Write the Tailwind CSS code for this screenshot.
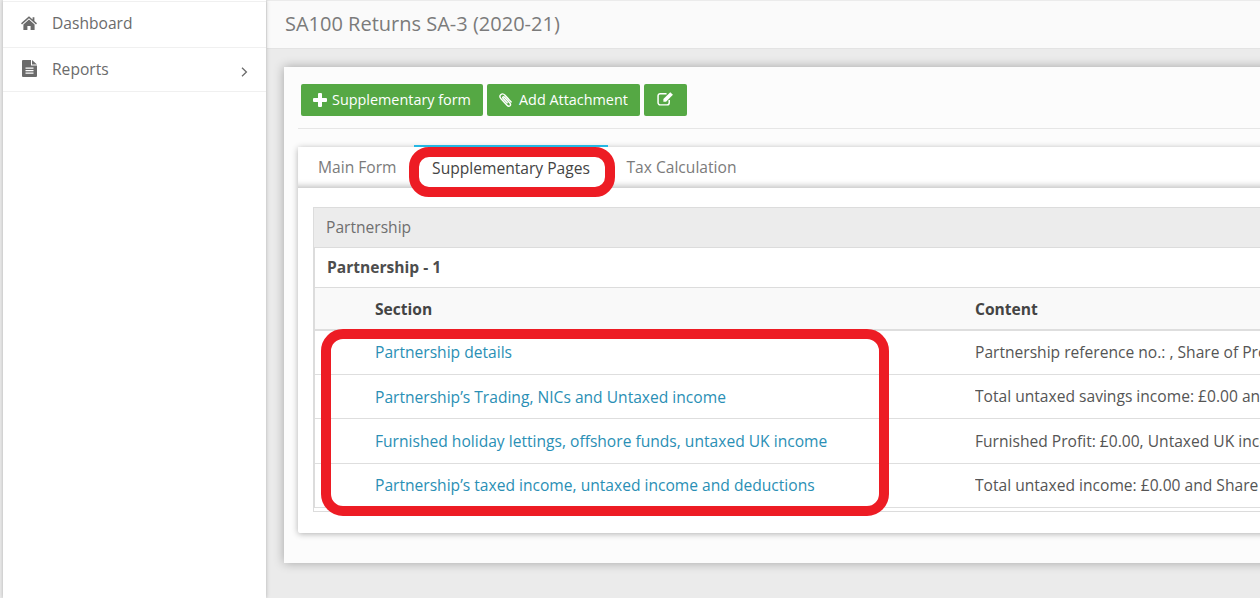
<!DOCTYPE html>
<html lang="en">

<head>
    <meta charset="UTF-8">
    <script src="https://cdn.jsdelivr.net/npm/@tailwindcss/browser@4"></script>
    <title>SA100 Returns</title>
</head>

<body class="bg-[#ebebeb] h-[598px] overflow-hidden font-['Open_Sans',sans-serif] text-[15.6px] text-[#555]">
    <div class="relative flex h-[598px] w-[1260px] overflow-hidden">
        <!-- sidebar -->
        <aside class="ml-[3px] w-[263px] shrink-0 bg-white shadow-[0_0_4px_rgba(0,0,0,0.25)] pt-px z-10">
            <a class="flex items-center h-[46px] border-t border-[#f0f0f0] pl-[18px] pb-[2px] text-[#6b6b6b]">
                <svg class="w-4 h-[14px] mb-px" viewBox="0 0 16 14" fill="#6b6b6b">
                    <path d="M8 0.2 L11.6 3.4 V1.2 H13.4 V5 L16 7.3 L15 8.4 L8 2.3 L1 8.4 L0 7.3 Z" />
                    <path d="M8 3.6 L13.6 8.4 V14 H9.6 V10 H6.4 V14 H2.4 V8.4 Z" />
                </svg>
                <span class="ml-[15px]">Dashboard</span>
            </a>
            <a class="flex items-center h-[45px] border-t border-b border-[#f0f0f0] pl-[19px] text-[#6b6b6b]">
                <svg class="w-[15px] h-[17px] mb-[3px]" viewBox="0 0 15 17">
                    <path fill="#6b6b6b" d="M1 0 H9 V5.5 H15 V16 a1 1 0 0 1 -1 1 H1 a1 1 0 0 1 -1 -1 V1 a1 1 0 0 1 1 -1 Z" />
                    <path fill="#6b6b6b" d="M10 0 L15 4.5 H10 Z" />
                    <path fill="#fff" d="M3.5 7.5 H11.5 V8.7 H3.5 Z M3.5 10 H11.5 V11.2 H3.5 Z M3.5 12.5 H11.5 V13.7 H3.5 Z" />
                </svg>
                <span class="ml-[15px] w-[189px]">Reports</span>
                <svg class="w-[7px] h-[10px] mt-[4px]" viewBox="0 0 7 10" fill="none" stroke="#6b6b6b" stroke-width="1.3">
                    <path d="M1 0.8 L5.4 5 L1 9.2" />
                </svg>
            </a>
        </aside>

        <!-- main -->
        <main class="ml-px w-[993px] shrink-0">
            <div class="mt-px h-[48px] bg-[#fafafa] border-b border-[#e3e3e3] pl-[18px] pb-[2px] flex items-center text-[20px] text-[#7b7b7b]">
                SA100 Returns SA-3 (2020-21)
            </div>

            <section class="mt-[18px] ml-[17px] w-[1000px] h-[496px] bg-[#fcfcfc] shadow-[0_0_10px_rgba(0,0,0,0.3)] pt-[17px] pl-[14px]">
                <div class="flex gap-1 pl-[3px] h-[32px]">
                    <button class="flex items-center h-8 w-[182px] pl-3 rounded-[2px] bg-[#55a844] text-white text-[14.4px]">
                        <svg class="w-[14px] h-[14px] mr-[5px]" viewBox="0 0 14 14" fill="#fff">
                            <path d="M5 1 a1 1 0 0 1 1 -1 H8 a1 1 0 0 1 1 1 V5 H13 a1 1 0 0 1 1 1 V8 a1 1 0 0 1 -1 1 H9 V13 a1 1 0 0 1 -1 1 H6 a1 1 0 0 1 -1 -1 V9 H1 a1 1 0 0 1 -1 -1 V6 a1 1 0 0 1 1 -1 H5 Z" />
                        </svg>
                        Supplementary form
                    </button>
                    <button class="flex items-center h-8 w-[153px] pl-3 rounded-[2px] bg-[#55a844] text-white text-[14.4px]">
                        <svg class="w-[14px] h-[14px] mr-[6px]" viewBox="0 0 14 14" fill="none" stroke="#fff" stroke-width="1.4">
                            <path d="M12.6 9.4 L6 2.2 C4.6 0.7 2.8 0.7 1.7 1.7 C0.6 2.8 0.8 4.4 2 5.7 L8 12.2 C8.9 13.2 10.2 13.4 11 12.7 C11.8 11.9 11.6 10.7 10.7 9.7 L5.5 4.2 C5 3.7 4.4 3.6 4 4 C3.6 4.4 3.7 5 4.2 5.5 L8.6 10.3" />
                        </svg>
                        Add Attachment
                    </button>
                    <button class="flex items-center justify-center h-8 w-[43px] rounded-[2px] bg-[#55a844] pb-[3px]">
                        <svg class="w-[17px] h-[15px]" viewBox="0 0 16 14">
                            <path fill="none" stroke="#fff" stroke-width="1.4" d="M11.5 8.5 V11 a2 2 0 0 1 -2 2 H3 a2 2 0 0 1 -2 -2 V4.5 a2 2 0 0 1 2 -2 H9" />
                            <path fill="#fff" d="M6 7.5 L12.5 1 L15 3.5 L8.5 10 H6 Z" />
                        </svg>
                    </button>
                </div>

                <hr class="mt-3 border-0 border-t border-[#e6e6e6]">

                <!-- tabs -->
                <div class="mt-[18px] bg-white shadow-[0_1px_6px_rgba(0,0,0,0.3)] rounded-[2px] h-[386px]">
                    <div class="relative flex h-[41px] items-center text-[#7b7b7b] bg-white shadow-[inset_0_-7px_6px_-5px_rgba(0,0,0,0.25)]">
                        <a class="ml-5">Main Form</a>
                        <a class="absolute left-[116px] -top-[2px] w-[194px] h-[43px] border-t-2 border-[#25b7e3] bg-white text-center leading-[42px] text-[#444]">Supplementary Pages</a>
                        <a class="ml-[230px]">Tax Calculation</a>
                    </div>

                    <div class="ml-[15px] mt-[19px] border border-[#dcdcdc] border-r-0">
                        <div class="h-[40px] bg-[#ececec] pl-3 flex items-center text-[#6f6f6f] border-b border-[#dcdcdc]">Partnership</div>
                        <div class="border-l border-[#dcdcdc] mb-[3px]">
                            <div class="h-[40px] pl-3 flex items-center font-bold text-[#4d4d4d] border-b border-[#dcdcdc]">Partnership - 1</div>
                            <table class="w-[985px] table-fixed">
                                <thead>
                                    <tr class="h-[42px] bg-[#f9f9f9] border-b-2 border-[#dedede] text-left text-[#444]">
                                        <th class="pl-[60px] pt-[2px] w-[660px] font-bold">Section</th>
                                        <th class="pt-[2px] font-bold">Content</th>
                                    </tr>
                                </thead>
                                <tbody>
                                    <tr class="h-[44px] border-b border-[#dedede]">
                                        <td class="pl-[60px] text-[#2a8fb5]">Partnership details</td>
                                        <td class="whitespace-nowrap overflow-hidden">Partnership reference no.: , Share of Profit: £0.00</td>
                                    </tr>
                                    <tr class="h-[44px] border-b border-[#dedede]">
                                        <td class="pl-[60px] pt-[4px] text-[#2a8fb5]">Partnership’s Trading, NICs and Untaxed income</td>
                                        <td class="pt-[2px] whitespace-nowrap overflow-hidden">Total untaxed savings income: £0.00 and Share</td>
                                    </tr>
                                    <tr class="h-[45px] border-b border-[#dedede]">
                                        <td class="pl-[60px] pt-[2px] text-[#2a8fb5]">Furnished holiday lettings, offshore funds, untaxed UK income</td>
                                        <td class="pt-[2px] whitespace-nowrap overflow-hidden">Furnished Profit: £0.00, Untaxed UK income: £0.00</td>
                                    </tr>
                                    <tr class="h-[44px] border-b border-[#dedede]">
                                        <td class="pl-[60px] pt-[2px] text-[#2a8fb5]">Partnership’s taxed income, untaxed income and deductions</td>
                                        <td class="pt-[2px] whitespace-nowrap overflow-hidden">Total untaxed income: £0.00 and Share of Profit</td>
                                    </tr>
                                </tbody>
                            </table>
                        </div>
                    </div>
                </div>
            </section>
        </main>

        <!-- red annotation boxes drawn over the screenshot -->
        <div class="absolute left-[409px] top-[147px] w-[206px] h-[50px] border-[10px] border-[#ed1c24] rounded-[20px] z-20"></div>
        <div class="absolute left-[321px] top-[329px] w-[568px] h-[187px] border-[10px] border-[#ed1c24] rounded-[22px] z-20"></div>
    </div>
</body>

</html>
